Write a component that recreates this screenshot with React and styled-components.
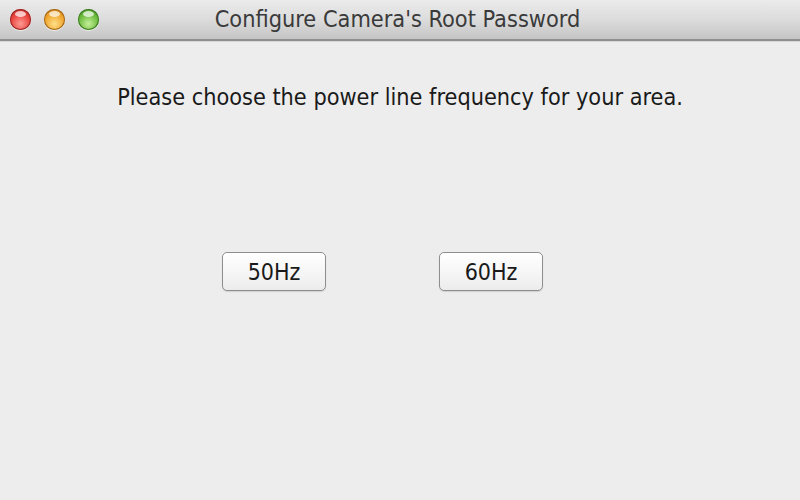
import React from "react";
import styled, { createGlobalStyle } from "styled-components";

const Global = createGlobalStyle`
  html, body { margin: 0; padding: 0; background: #ededed; }
  body { font-family: "DejaVu Sans Condensed", "DejaVu Sans", sans-serif; font-stretch: condensed; }
`;

const Window = styled.div`
  width: 800px;
  height: 500px;
  display: flex;
  flex-direction: column;
  background: #ededed;
  overflow: hidden;
`;

const TitleBar = styled.div`
  height: 39px;
  flex: none;
  position: relative;
  display: flex;
  align-items: center;
  justify-content: center;
  background: linear-gradient(#ebebeb 0%, #dcdcdc 50%, #c5c5c5 100%);
  border-bottom: 2px solid #8f8f8f;
  box-shadow: 0 1px 0 #d8d8d8;
`;

const Lights = styled.div`
  position: absolute;
  left: 10px;
  top: 9px;
  display: flex;
  gap: 13px;
`;

const Light = styled.div`
  width: 21px;
  height: 21px;
  border-radius: 50%;
  background: radial-gradient(circle at 50% 70%, ${(p) => p.$light} 0%, ${(p) => p.$mid} 55%, ${(p) => p.$dark} 100%);
  box-shadow: inset 0 0 0 1px ${(p) => p.$edge}, 0 1px 1px rgba(255,255,255,0.7);
  position: relative;
  &::after {
    content: "";
    position: absolute;
    left: 5px;
    top: 2px;
    width: 11px;
    height: 6px;
    border-radius: 50%;
    background: rgba(255,255,255,0.7);
  }
`;

const Title = styled.div`
  font-size: 23.3px;
  line-height: 28px;
  color: #3a3a3a;
  margin-top: -2px;
  margin-left: -5px;
`;

const Content = styled.div`
  flex: 1;
  display: flex;
  flex-direction: column;
  align-items: center;
`;

const Message = styled.div`
  margin-top: 42px;
  font-size: 23.25px;
  line-height: 28px;
  color: #1a1a1a;
`;

const ButtonRow = styled.div`
  margin-top: 141px;
  display: flex;
  gap: 113px;
  margin-left: -35px;
`;

const Button = styled.button`
  width: 104px;
  height: 39px;
  border: 1px solid #8e8e8e;
  border-radius: 5px;
  background: linear-gradient(#ffffff 0%, #f6f6f6 50%, #ececec 100%);
  box-shadow: 0 1px 1px rgba(0,0,0,0.12);
  font-family: "DejaVu Sans Condensed", "DejaVu Sans", sans-serif;
  font-stretch: condensed;
  font-size: 23px;
  color: #1a1a1a;
  padding: 0;
`;

export default function App() {
  return (
    <>
      <Global />
      <Window>
        <TitleBar>
          <Lights>
            <Light $light="#ff9a94" $mid="#e8423c" $dark="#b21e1a" $edge="#9a2a26" />
            <Light $light="#ffe08a" $mid="#efa52c" $dark="#c27512" $edge="#a06820" />
            <Light $light="#c6f09a" $mid="#6cbb3e" $dark="#3a8a1c" $edge="#3e7a24" />
          </Lights>
          <Title>Configure Camera's Root Password</Title>
        </TitleBar>
        <Content>
          <Message>Please choose the power line frequency for your area.</Message>
          <ButtonRow>
            <Button>50Hz</Button>
            <Button>60Hz</Button>
          </ButtonRow>
        </Content>
      </Window>
    </>
  );
}
